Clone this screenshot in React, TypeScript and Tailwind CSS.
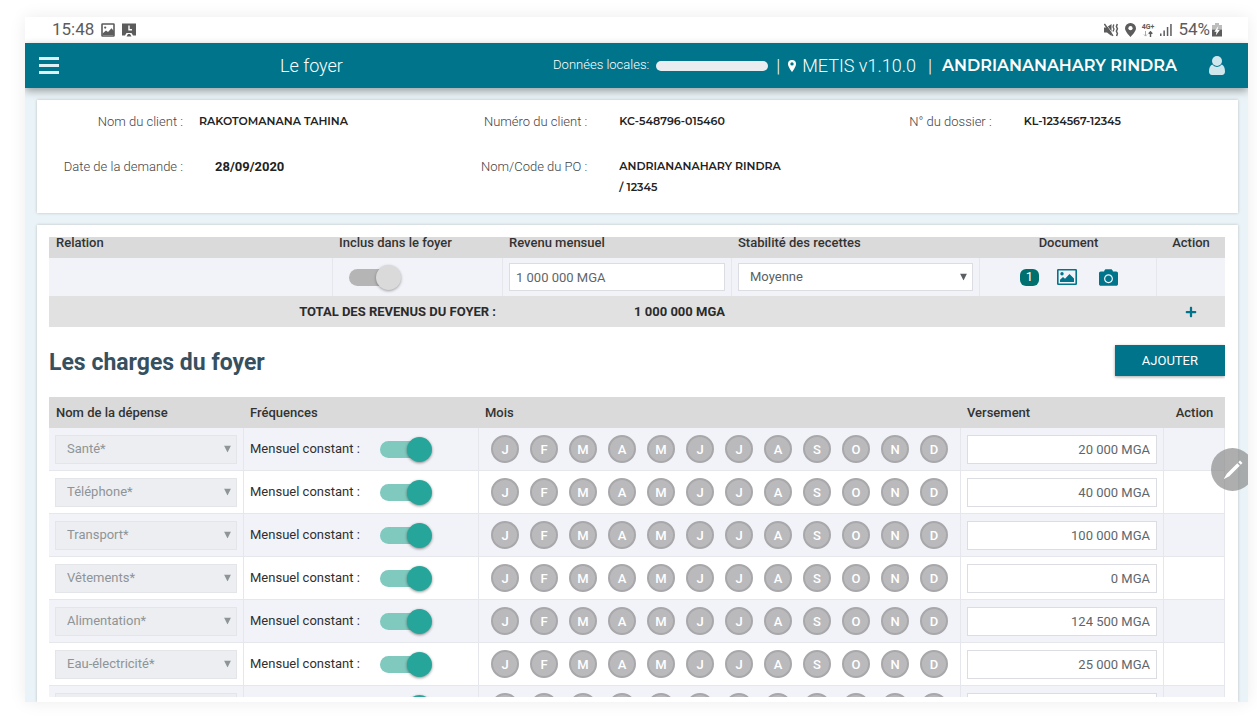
import React from "react";
import { FaCamera, FaPlus } from "react-icons/fa";

const months = [
  { letter: "J", name: "Janvier" },
  { letter: "F", name: "Février" },
  { letter: "M", name: "Mars" },
  { letter: "A", name: "Avril" },
  { letter: "M", name: "Mai" },
  { letter: "J", name: "Juin" },
  { letter: "J", name: "Juillet" },
  { letter: "A", name: "Août" },
  { letter: "S", name: "Septembre" },
  { letter: "O", name: "Octobre" },
  { letter: "N", name: "Novembre" },
  { letter: "D", name: "Décembre" },
];

const expenses = [
  { name: "Santé*", amount: "20 000 MGA" },
  { name: "Téléphone*", amount: "40 000 MGA" },
  { name: "Transport*", amount: "100 000 MGA" },
  { name: "Vêtements*", amount: "0 MGA" },
  { name: "Alimentation*", amount: "124 500 MGA" },
  { name: "Eau-électricité*", amount: "25 000 MGA" },
  { name: "", amount: "" },
];

function StatusBar() {
  return (
    <div className="flex h-[26px] shrink-0 items-center justify-between bg-white pl-[27px] pr-[26px] text-[17px] text-[#5c5c5c]">
      <div className="flex items-center gap-[7px]">
        <span>15:48</span>
        <svg className="h-3.5 w-3.5" viewBox="0 0 14 14" fill="none">
          <rect x="1" y="1" width="12" height="12" rx="0.5" stroke="currentColor" strokeWidth="1.6" />
          <circle cx="4.2" cy="4.6" r="1.1" fill="currentColor" />
          <path d="M1.5 10.5 5 7.5l2 1.5 3.5-3.8 2.5 3V12H1.5z" fill="currentColor" />
        </svg>
        <svg className="h-3.5 w-3.5" viewBox="0 0 14 14">
          <path d="M0 .5h14v12h-3L9.5 10h-5L3 12.5H0z" fill="currentColor" />
          <path d="M7 2.5v4.3h3" stroke="#fff" strokeWidth="1.4" fill="none" />
          <path d="M4.5 13.5 6 11h2l1.5 2.5z" fill="currentColor" />
        </svg>
      </div>
      <div className="flex items-center gap-1.5">
        <svg className="h-3.5 w-[15px]" viewBox="0 0 15 14" fill="none">
          <path d="M0 4.5h2.5L7.5 1v12L3 9.5H0z" fill="currentColor" />
          <path d="M1.5.8 10 12.3" stroke="#fff" strokeWidth="0.8" />
          <path d="M.4 1 9 12.8" stroke="currentColor" strokeWidth="1.4" />
          <path d="M9.8 1.5 9 4l1 2-1 2.5" stroke="currentColor" strokeWidth="1.3" />
          <path d="M13.3 1l-.9 2.500 1 2.300-1 2.400 1 2.300-.8 2.500" stroke="currentColor" strokeWidth="1.500" />
        </svg>
        <svg className="h-3.5 w-[11px]" viewBox="0 0 11 14">
          <path d="M5.500 0A5.400 5.400 0 0 0 0 5.300C0 8.800 5.500 14 5.500 14S11 8.800 11 5.300A5.400 5.400 0 0 0 5.500 0z" fill="currentColor" />
          <circle cx="5.500" cy="5.200" r="2.100" fill="#fff" />
        </svg>
        <div className="flex flex-col items-center text-[7px] font-bold leading-[7px]">
          <span>4G+</span>
          <svg className="h-1.5 w-2.5" viewBox="0 0 10 6" fill="none">
            <path d="M2.500 0v5M1 3.500l1.500 1.600L4 3.500" stroke="#aaa" strokeWidth="1" />
            <path d="M7.500 6V1M5.700 2.700 7.500.8l1.800 1.900" stroke="currentColor" strokeWidth="1.400" />
          </svg>
        </div>
        <svg className="h-3.5 w-3" viewBox="0 0 12 14" fill="currentColor">
          <rect x="0" y="10.500" width="1.500" height="2.500" />
          <rect x="3.400" y="7.500" width="1.500" height="5.500" />
          <rect x="6.800" y="4" width="1.500" height="9" />
          <rect x="10.200" y="1" width="1.500" height="12" />
        </svg>
        <span className="flex items-center gap-0.5">
          54%
          <svg className="h-3.5 w-2.5" viewBox="0 0 10 14">
            <path d="M3 0h4v2h3v4.500H0V2h3z" fill="#bdbdbd" />
            <path d="M0 6.500h10V13.500H0z" fill="currentColor" />
            <path d="M6.300 3 2.300 8.700h2.200L3.800 12.500l4-5.500H5.500z" fill="#fff" />
          </svg>
        </span>
      </div>
    </div>
  );
}

function Header() {
  return (
    <header className="z-10 flex h-[45px] shrink-0 items-center bg-[#00748b] pl-3.5 pr-[23px] font-light text-white shadow-[0_3px_8px_rgba(0,0,0,0.35)]">
      <button type="button" aria-label="Menu" className="flex w-5 flex-col gap-1">
        <span className="h-[3px] w-full bg-[#dff1f4]"></span>
        <span className="h-[3px] w-full bg-[#dff1f4]"></span>
        <span className="h-[3px] w-full bg-[#dff1f4]"></span>
      </button>
      <h1 className="ml-[221px] text-lg">Le foyer</h1>
      <div className="ml-auto flex items-center text-lg">
        <span className="text-[13px]">Données locales:</span>
        <div className="ml-[7px] h-2.5 w-28 rounded-full bg-[#e9edef]"></div>
        <span className="ml-2">|</span>
        <svg className="ml-2 h-3 w-2" viewBox="0 0 8 12">
          <path d="M4 0a4 4 0 0 0-4 4c0 3 4 8 4 8s4-5 4-8a4 4 0 0 0-4-4zm0 5.600a1.700 1.700 0 1 1 0-3.400 1.700 1.700 0 0 1 0 3.400z" fill="#fff" />
        </svg>
        <span className="ml-1.5">METIS v1.10.0</span>
        <span className="ml-3">|</span>
        <span className="ml-2.5 font-[Montserrat,Inter,sans-serif] text-base font-semibold">ANDRIANANAHARY RINDRA</span>
        <button type="button" aria-label="Profil" className="ml-8">
          <svg className="h-[19px] w-4" viewBox="0 0 16 19" fill="#cfe6ec">
            <circle cx="8" cy="5" r="5" />
            <path d="M3.200 8.600C1.200 9.600 0 12 0 15.500 0 17.800 1.200 19 3 19h10c1.800 0 3-1.200 3-3.500 0-3.500-1.200-5.900-3.200-6.900a6.200 6.200 0 0 1-9.600 0z" />
          </svg>
        </button>
      </div>
    </header>
  );
}

function Info({ label, children }: { label: string; children: React.ReactNode }) {
  return (
    <div className="flex">
      <dt className="w-[146px] shrink-0 text-right text-[13px] font-light leading-[21px] text-[#444]">{label} :</dt>
      {children}
    </div>
  );
}

function ClientCard() {
  return (
    <dl className="grid shrink-0 grid-cols-3 gap-x-3 gap-y-6 bg-white pb-[15px] pt-[11px] shadow-[0_0_3px_rgba(0,0,0,0.2)]">
      <Info label="Nom du client">
        <dd className="pl-4 font-[Montserrat,Inter,sans-serif] text-[11px] font-semibold leading-[21px]">RAKOTOMANANA TAHINA</dd>
      </Info>
      <Info label="Numéro du client">
        <dd className="pl-8 font-[Montserrat,Inter,sans-serif] text-[11px] font-semibold leading-[21px]">KC-548796-015460</dd>
      </Info>
      <Info label="N° du dossier">
        <dd className="pl-8 font-[Montserrat,Inter,sans-serif] text-[11px] font-semibold leading-[21px]">KL-1234567-12345</dd>
      </Info>
      <Info label="Date de la demande">
        <dd className="pl-8 text-[13px] font-bold leading-[21px]">28/09/2020</dd>
      </Info>
      <Info label="Nom/Code du PO">
        <dd className="pl-8 font-[Montserrat,Inter,sans-serif] text-[11px] font-semibold leading-[21px]">
          ANDRIANANAHARY RINDRA
          <br />/ 12345
        </dd>
      </Info>
    </dl>
  );
}

function Arrow() {
  return (
    <svg className="pointer-events-none absolute right-1.5 top-1/2 h-[7px] w-[7px] -translate-y-1/2" viewBox="0 0 7 7">
      <path d="M0 0h7L3.500 7z" fill="currentColor" />
    </svg>
  );
}

function IncomeTable() {
  return (
    <table className="w-full table-fixed border-separate border-spacing-0 text-[13px]">
      <colgroup>
        <col />
        <col className="w-[170px]" />
        <col className="w-[229px]" />
        <col className="w-[248px]" />
        <col className="w-[177px]" />
        <col className="w-[68px]" />
      </colgroup>
      <thead className="bg-[#dadada] text-left leading-[11px] text-[#333]">
        <tr>
          <th className="px-[7px] pb-2.5 font-medium">Relation</th>
          <th className="px-1.5 pb-2.5 font-medium">Inclus dans le foyer</th>
          <th className="px-1.5 pb-2.5 font-medium">Revenu mensuel</th>
          <th className="px-1.5 pb-2.5 font-medium">Stabilité des recettes</th>
          <th className="pb-2.5 text-center font-medium">Document</th>
          <th className="pb-2.5 text-center font-medium">Action</th>
        </tr>
      </thead>
      <tbody className="bg-[#f2f3f8]">
        <tr className="h-[38px]">
          <td className="border-r border-[#e6e7ec]"></td>
          <td className="border-r border-[#e6e7ec] pl-4">
            <input
              type="checkbox"
              aria-label="Inclus dans le foyer"
              disabled
              className="relative block h-[17px] w-12 appearance-none rounded-full bg-[#b5b5b5] after:absolute after:-right-1 after:-top-1 after:size-[25px] after:rounded-full after:bg-[#dadada] after:shadow-[0_1px_3px_rgba(0,0,0,0.35)]"
            />
          </td>
          <td className="border-r border-[#e6e7ec] px-1.5">
            <input
              aria-label="Revenu mensuel"
              defaultValue="1 000 000 MGA"
              className="block h-7 w-full border border-[#dcdde2] bg-white px-1.5 text-[#5f666b]"
            />
          </td>
          <td className="border-r border-[#e6e7ec] px-1.5">
            <div className="relative text-[#5a5f64]">
              <select aria-label="Stabilité des recettes" className="block h-7 w-full appearance-none border border-[#dcdde2] bg-white px-[11px]">
                <option>Moyenne</option>
              </select>
              <Arrow />
            </div>
          </td>
          <td className="border-r border-[#e6e7ec]">
            <div className="flex items-center justify-center gap-[18px] pl-0.5 text-[#00748b]">
              <span className="flex h-[17px] w-[19px] items-center justify-center rounded-md bg-[#00706f] text-white">1</span>
              <button type="button" aria-label="Voir les documents">
                <svg className="h-4 w-5" viewBox="0 0 20 16" fill="none">
                  <rect x="0.800" y="0.800" width="18.400" height="14.400" rx="0.500" stroke="currentColor" strokeWidth="1.600" />
                  <circle cx="5" cy="4.800" r="1.700" fill="currentColor" />
                  <path d="M3 13v-2.200l3-2.800 2 1.700L12.500 5 17 9.500V13z" fill="currentColor" />
                </svg>
              </button>
              <button type="button" aria-label="Prendre une photo" className="pl-1">
                <FaCamera size={19} />
              </button>
            </div>
          </td>
          <td></td>
        </tr>
      </tbody>
      <tfoot className="bg-[#e1e1e1] text-right text-[#2b2b2b]">
        <tr className="h-[31px]">
          <td colSpan={2} className="px-[7px] font-bold">TOTAL DES REVENUS DU FOYER :</td>
          <td className="px-[7px] font-bold">1 000 000 MGA</td>
          <td colSpan={2}></td>
          <td>
            <button type="button" aria-label="Ajouter un revenu" className="mx-auto block text-[#00748b]">
              <FaPlus size={12} />
            </button>
          </td>
        </tr>
      </tfoot>
    </table>
  );
}

function ExpenseRow({ name, amount }: { name: string; amount: string }) {
  return (
    <tr className="h-[43px] odd:bg-[#f2f3f8]">
      <td className="border-b border-r border-[#e6e7ec] px-1.5">
        <div className="relative text-[#8f9497]">
          <select aria-label="Nom de la dépense" disabled className="block h-[29px] w-full appearance-none border border-[#e3e5e9] bg-[#eceef1] px-[11px] opacity-100">
            <option>{name}</option>
          </select>
          <Arrow />
        </div>
      </td>
      <td className="border-b border-r border-[#e6e7ec] px-1.5">
        <label className="flex items-center gap-5 text-[#2f2f2f]">
          Mensuel constant :
          <input
            type="checkbox"
            defaultChecked
            className="relative block h-[17px] w-12 appearance-none rounded-full bg-[#80c9bf] after:absolute after:-right-1 after:-top-1 after:size-[25px] after:rounded-full after:bg-[#26a69a] after:shadow-[0_1px_3px_rgba(0,0,0,0.45)]"
          />
        </label>
      </td>
      <td className="border-b border-r border-[#e6e7ec] px-3">
        <div className="flex gap-[11px]">
          {months.map((month) => (
            <button
              key={month.name}
              type="button"
              aria-label={month.name}
              className="size-7 rounded-full border-2 border-[#a8a8ab] bg-[#bababc] text-[13px] font-medium leading-none text-white"
            >
              {month.letter}
            </button>
          ))}
        </div>
      </td>
      <td className="border-b border-r border-[#e6e7ec] px-1.5">
        <input aria-label="Versement" defaultValue={amount} className="block h-[29px] w-full border border-[#dcdde2] bg-white px-1.5 text-right text-[#5f666b]" />
      </td>
      <td className="border-b border-r border-[#e6e7ec]"></td>
    </tr>
  );
}

function ExpenseTable() {
  return (
    <table className="mt-4 w-full table-fixed border-separate border-spacing-0 text-[13px]">
      <colgroup>
        <col className="w-[195px]" />
        <col className="w-[235px]" />
        <col />
        <col className="w-[203px]" />
        <col className="w-[61px]" />
      </colgroup>
      <thead className="bg-[#dadada] text-left text-[#333]">
        <tr className="h-[31px]">
          <th className="px-[7px] font-medium">Nom de la dépense</th>
          <th className="px-1.5 font-medium">Fréquences</th>
          <th className="px-1.5 font-medium">Mois</th>
          <th className="px-1.5 font-medium">Versement</th>
          <th className="text-center font-medium">Action</th>
        </tr>
      </thead>
      <tbody>
        {expenses.map((expense) => (
          <ExpenseRow key={expense.name} name={expense.name} amount={expense.amount} />
        ))}
      </tbody>
    </table>
  );
}

export default function App() {
  return (
    <div className="h-screen bg-white pb-4 pl-[25px] pr-[9px] pt-[17px] font-[Roboto,sans-serif] text-[#222]">
      <div className="relative flex h-full flex-col overflow-hidden shadow-[0_0_16px_rgba(0,0,0,0.08)]">
        <StatusBar />
        <Header />
        <main className="flex min-h-0 flex-1 flex-col gap-3 bg-[#eaf3f7] pl-3 pr-2.5 pt-3">
          <ClientCard />
          <section className="flex min-h-0 flex-1 flex-col bg-white pb-[5px] pl-3 pr-[13px] shadow-[0_0_3px_rgba(0,0,0,0.2)]">
            <div className="min-h-0 flex-1 overflow-hidden pt-3">
              <IncomeTable />
              <div className="mt-[18px] flex items-start justify-between">
                <h2 className="text-[23px] font-bold leading-9 text-[#37505f]">Les charges du foyer</h2>
                <button type="button" className="h-[31px] bg-[#00748b] px-[27px] text-[13px] text-white shadow-[0_1px_3px_rgba(0,0,0,0.35)]">
                  AJOUTER
                </button>
              </div>
              <ExpenseTable />
            </div>
          </section>
        </main>
        <button
          type="button"
          aria-label="Modifier"
          className="absolute -right-1.5 top-[431px] z-20 flex size-[43px] items-center justify-center rounded-full bg-[#8c8c8c]/70"
        >
          <svg className="h-5 w-5" viewBox="0 0 20 20" fill="#fff">
            <path d="M14.300 3.200 16.800 5.700 6.300 16.200 2 18.500.8 19.200 1.300 18 3.800 13.700z" />
            <path d="M15.300 2.200 17 .5l2.500 2.500-1.700 1.700z" />
          </svg>
        </button>
      </div>
    </div>
  );
}
